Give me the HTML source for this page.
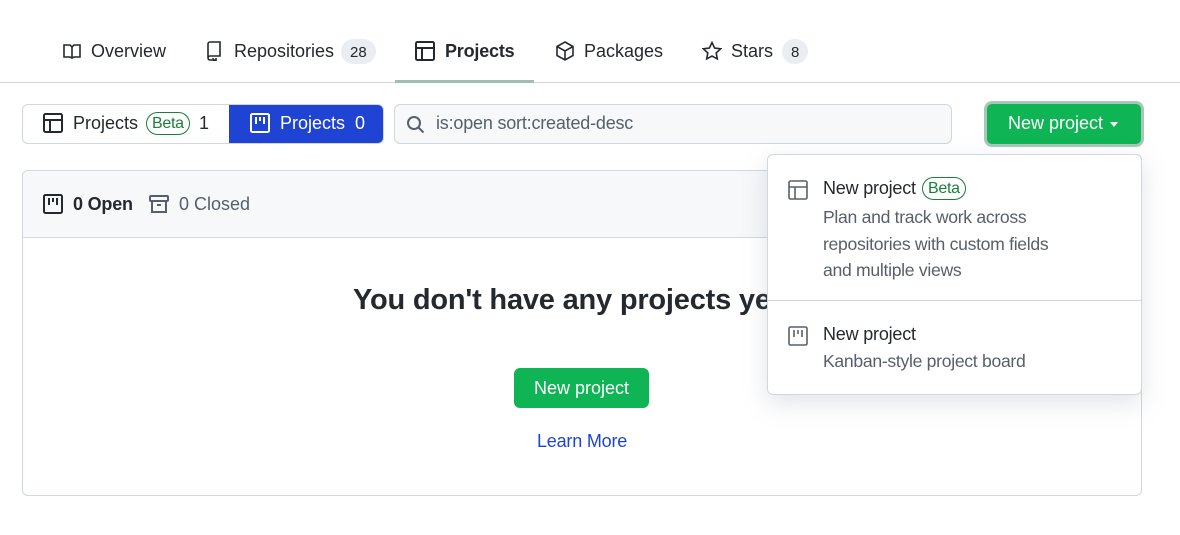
<!DOCTYPE html><html><head><style>
*{box-sizing:border-box;margin:0;padding:0}
body{width:1180px;height:535px;background:#fff;font-family:"Liberation Sans",sans-serif;color:#24292f;position:relative;overflow:hidden;font-size:18px}
.a{position:absolute}
svg{fill:none;stroke:currentColor;stroke-width:1.6}
.cnt{background:#eaeef2;border-radius:14px;font-size:15px;padding:5px 9px 3px}
.beta{border:1.3px solid #1a7f37;color:#1a7f37;border-radius:12px;font-size:16px;padding:2px 5px 1px;letter-spacing:-0.3px}
</style></head><body>
<div class="a" style="left:0;top:82px;width:1180px;height:1px;background:#d0d7de"></div>
<div class="a" style="left:395px;top:80px;width:139px;height:3px;background:#9fbfb0"></div>
<svg class="a" style="left:62px;top:41px" width="20" height="20" viewBox="0 0 20 20"><path d="M2 4h6l2 2 2-2h6v12h-6l-2 1-2-1H2z M10 6v11"/></svg>
<div class="a" style="left:91px;top:41px">Overview</div>
<svg class="a" style="left:205px;top:41px" width="18" height="20" viewBox="0 0 18 20"><path d="M3 16V3a2 2 0 012-2h10v14H5a2 2 0 00-2 2 2 2 0 002 2h2 M8 17v3l1.5-1 1.5 1v-3"/></svg>
<div class="a" style="left:234px;top:41px">Repositories</div>
<div class="a cnt" style="left:341px;top:39px">28</div>
<svg class="a" style="left:415px;top:41px;stroke-width:2" width="20" height="20" viewBox="0 0 20 20"><rect x="1" y="1" width="18" height="18" rx="1.5"/><path d="M1 7h18M7 7v12"/></svg>
<div class="a" style="left:445px;top:41px;font-weight:bold;letter-spacing:-0.2px">Projects</div>
<svg class="a" style="left:555px;top:41px" width="20" height="20" viewBox="0 0 20 20"><path d="M10 1l8 4.5v9L10 19l-8-4.5v-9z M2 5.5l8 4.5 8-4.5 M10 10v9"/></svg>
<div class="a" style="left:584px;top:41px">Packages</div>
<svg class="a" style="left:702px;top:41px" width="20" height="20" viewBox="0 0 20 20"><path d="M10 1.5l2.6 5.5 6 .8-4.4 4.1 1.1 6L10 15l-5.3 2.9 1.1-6L1.4 7.8l6-.8z"/></svg>
<div class="a" style="left:731px;top:41px">Stars</div>
<div class="a cnt" style="left:782px;top:39px">8</div>

<div class="a" style="left:22px;top:104px;width:362px;height:40px;border:1px solid #d0d7de;border-radius:6px;overflow:hidden">
<div class="a" style="left:206px;top:-1px;width:156px;height:40px;background:#1f44d4"></div></div>
<svg class="a" style="left:43px;top:113px;stroke-width:2" width="20" height="20" viewBox="0 0 20 20"><rect x="1" y="1" width="18" height="18" rx="1.5"/><path d="M1 7h18M7 7v12"/></svg>
<div class="a" style="left:73px;top:113px">Projects</div>
<div class="a beta" style="left:146px;top:112px">Beta</div>
<div class="a" style="left:199px;top:113px">1</div>
<svg class="a" style="left:250px;top:113px;color:#fff;stroke-width:2" width="20" height="20" viewBox="0 0 20 20"><rect x="1" y="1" width="18" height="18" rx="1.5"/><path d="M6 4v7M10 4v4M14 4v7"/></svg>
<div class="a" style="left:280px;top:113px;color:#fff">Projects&nbsp;&nbsp;0</div>

<div class="a" style="left:394px;top:104px;width:558px;height:40px;border:1px solid #d0d7de;border-radius:6px;background:#f6f8fa"></div>
<svg class="a" style="left:406px;top:115px;color:#57606a;stroke-width:2" width="20" height="20" viewBox="0 0 20 20"><circle cx="8" cy="8" r="6"/><path d="M12.5 12.5l5 5"/></svg>
<div class="a" style="left:436px;top:113px;color:#57606a;letter-spacing:-0.2px">is:open sort:created-desc</div>

<div class="a" style="left:984px;top:101px;width:160px;height:46px;border:3px solid #a9c7b8;border-radius:8px;background:#0fb454"></div>
<div class="a" style="left:1008px;top:113px;color:#fff">New project</div>
<div class="a" style="left:1110px;top:122px;border:4.5px solid transparent;border-top:5px solid #fff"></div>

<div class="a" style="left:22px;top:170px;width:1120px;height:326px;border:1px solid #d0d7de;border-radius:6px;overflow:hidden">
<div style="height:67px;background:#f6f8fa;border-bottom:1px solid #d0d7de"></div></div>
<svg class="a" style="left:43px;top:194px;stroke-width:2" width="20" height="20" viewBox="0 0 20 20"><rect x="1" y="1" width="18" height="18" rx="1.5"/><path d="M6 4v7M10 4v4M14 4v7"/></svg>
<div class="a" style="left:73px;top:194px;font-weight:bold;letter-spacing:-0.2px">0 Open</div>
<svg class="a" style="left:149px;top:194px;color:#57606a;stroke-width:2" width="20" height="20" viewBox="0 0 20 20"><rect x="1" y="2" width="18" height="5" rx="1"/><path d="M3 7v11h14V7M8 11h4"/></svg>
<div class="a" style="left:179px;top:194px;color:#57606a">0 Closed</div>
<div class="a" style="left:353px;top:284px;font-size:29px;font-weight:bold;letter-spacing:-0.2px">You don't have any projects yet</div>
<div class="a" style="left:514px;top:368px;width:135px;height:40px;background:#0fb454;border-radius:6px;color:#fff;text-align:center;line-height:40px">New project</div>
<div class="a" style="left:537px;top:431px;color:#1f44d4;letter-spacing:-0.2px">Learn More</div>

<div class="a" style="left:767px;top:154px;width:375px;height:241px;background:#fff;border:1px solid #d0d7de;border-radius:6px;box-shadow:0 8px 24px rgba(140,149,159,.25)">
<div class="a" style="left:0;top:145px;width:373px;height:1px;background:#d0d7de"></div></div>
<svg class="a" style="left:788px;top:180px;color:#57606a" width="20" height="20" viewBox="0 0 20 20"><rect x="1" y="1" width="18" height="18" rx="1.5"/><path d="M1 7h18M7 7v12"/></svg>
<div class="a" style="left:823px;top:178px;letter-spacing:-0.2px">New project</div>
<div class="a beta" style="left:922px;top:177px">Beta</div>
<div class="a" style="left:823px;top:204px;color:#57606a;line-height:26.5px;letter-spacing:-0.3px;font-size:17.6px">Plan and track work across<br>repositories with custom fields<br>and multiple views</div>
<svg class="a" style="left:788px;top:326px;color:#57606a" width="20" height="20" viewBox="0 0 20 20"><rect x="1" y="1" width="18" height="18" rx="1.5"/><path d="M6 4v7M10 4v4M14 4v7"/></svg>
<div class="a" style="left:823px;top:324px;letter-spacing:-0.2px">New project</div>
<div class="a" style="left:823px;top:351px;color:#57606a;letter-spacing:-0.3px;font-size:17.6px">Kanban-style project board</div>
</body></html>
